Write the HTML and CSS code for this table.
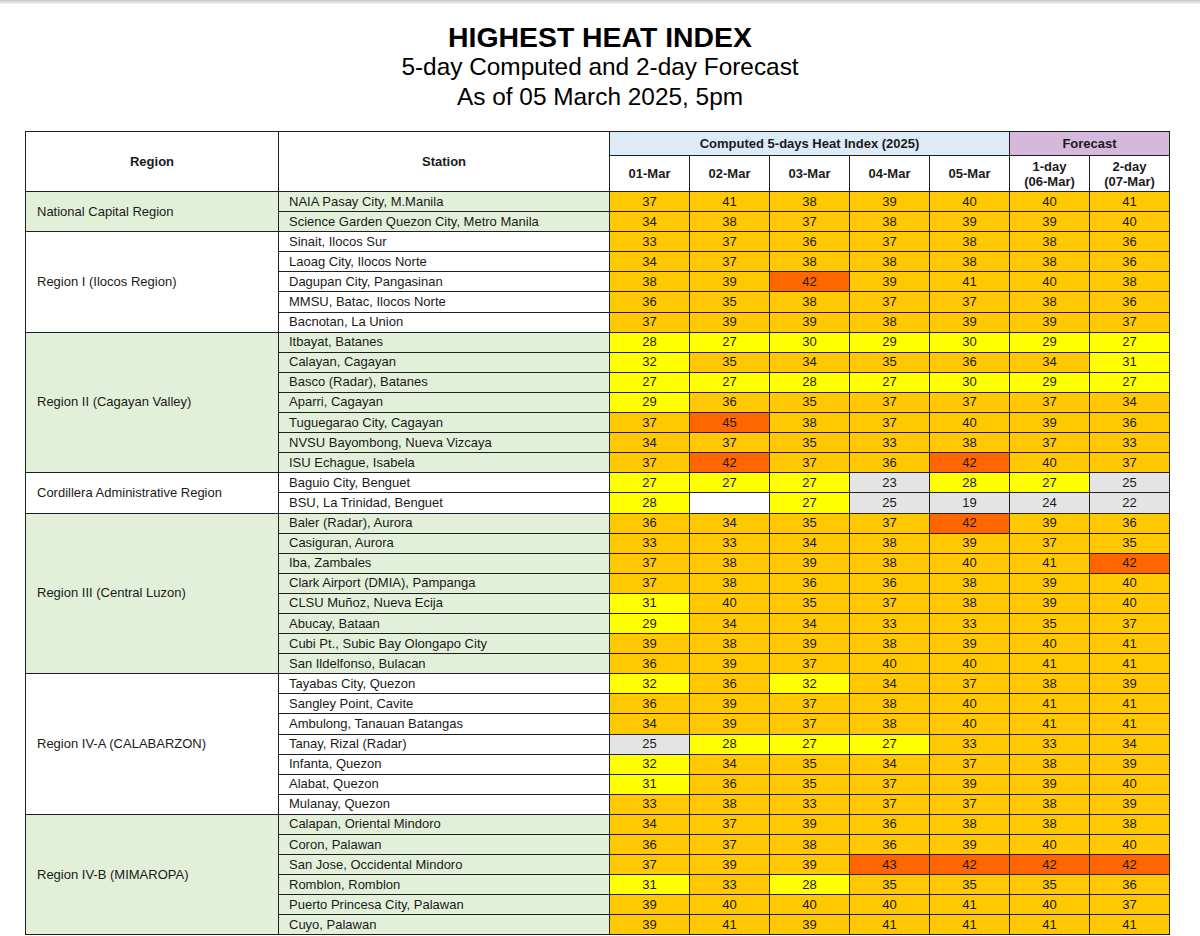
FILE: index.html
```html
<!DOCTYPE html>
<html lang="en">
<head>
<meta charset="utf-8">
<title>Highest Heat Index</title>
<link rel="stylesheet" href="styles.css">
</head>
<body>
<div class="topbar"></div>
<header class="titles">
  <h1 class="title">HIGHEST HEAT INDEX</h1>
  <p class="sub">5-day Computed and 2-day Forecast</p>
  <p class="sub">As of 05 March 2025, 5pm</p>
</header>
<table class="hi">
  <colgroup>
    <col class="col-region"><col class="col-station">
    <col class="col-day"><col class="col-day"><col class="col-day"><col class="col-day"><col class="col-day"><col class="col-day"><col class="col-day">
  </colgroup>
  <thead>
    <tr class="h1row">
      <th rowspan="2" class="hreg">Region</th>
      <th rowspan="2" class="hsta">Station</th>
      <th colspan="5" class="hcomp">Computed 5-days Heat Index (2025)</th>
      <th colspan="2" class="hfc">Forecast</th>
    </tr>
    <tr class="h2row">
      <th>01-Mar</th><th>02-Mar</th><th>03-Mar</th><th>04-Mar</th><th>05-Mar</th>
      <th>1-day<br>(06-Mar)</th><th>2-day<br>(07-Mar)</th>
    </tr>
  </thead>
  <tbody class="grp green">
    <tr><td rowspan="2" class="reg">National Capital Region</td><td class="sta">NAIA Pasay City, M.Manila</td><td class="o">37</td><td class="o">41</td><td class="o">38</td><td class="o">39</td><td class="o">40</td><td class="o">40</td><td class="o">41</td></tr>
    <tr><td class="sta">Science Garden Quezon City, Metro Manila</td><td class="o">34</td><td class="o">38</td><td class="o">37</td><td class="o">38</td><td class="o">39</td><td class="o">39</td><td class="o">40</td></tr>
  </tbody>
  <tbody class="grp white">
    <tr><td rowspan="5" class="reg">Region I (Ilocos Region)</td><td class="sta">Sinait, Ilocos Sur</td><td class="o">33</td><td class="o">37</td><td class="o">36</td><td class="o">37</td><td class="o">38</td><td class="o">38</td><td class="o">36</td></tr>
    <tr><td class="sta">Laoag City, Ilocos Norte</td><td class="o">34</td><td class="o">37</td><td class="o">38</td><td class="o">38</td><td class="o">38</td><td class="o">38</td><td class="o">36</td></tr>
    <tr><td class="sta">Dagupan City, Pangasinan</td><td class="o">38</td><td class="o">39</td><td class="r">42</td><td class="o">39</td><td class="o">41</td><td class="o">40</td><td class="o">38</td></tr>
    <tr><td class="sta">MMSU, Batac, Ilocos Norte</td><td class="o">36</td><td class="o">35</td><td class="o">38</td><td class="o">37</td><td class="o">37</td><td class="o">38</td><td class="o">36</td></tr>
    <tr><td class="sta">Bacnotan, La Union</td><td class="o">37</td><td class="o">39</td><td class="o">39</td><td class="o">38</td><td class="o">39</td><td class="o">39</td><td class="o">37</td></tr>
  </tbody>
  <tbody class="grp green">
    <tr><td rowspan="7" class="reg">Region II (Cagayan Valley)</td><td class="sta">Itbayat, Batanes</td><td class="y">28</td><td class="y">27</td><td class="y">30</td><td class="y">29</td><td class="y">30</td><td class="y">29</td><td class="y">27</td></tr>
    <tr><td class="sta">Calayan, Cagayan</td><td class="y">32</td><td class="o">35</td><td class="o">34</td><td class="o">35</td><td class="o">36</td><td class="o">34</td><td class="y">31</td></tr>
    <tr><td class="sta">Basco (Radar), Batanes</td><td class="y">27</td><td class="y">27</td><td class="y">28</td><td class="y">27</td><td class="y">30</td><td class="y">29</td><td class="y">27</td></tr>
    <tr><td class="sta">Aparri, Cagayan</td><td class="y">29</td><td class="o">36</td><td class="o">35</td><td class="o">37</td><td class="o">37</td><td class="o">37</td><td class="o">34</td></tr>
    <tr><td class="sta">Tuguegarao City, Cagayan</td><td class="o">37</td><td class="r">45</td><td class="o">38</td><td class="o">37</td><td class="o">40</td><td class="o">39</td><td class="o">36</td></tr>
    <tr><td class="sta">NVSU Bayombong, Nueva Vizcaya</td><td class="o">34</td><td class="o">37</td><td class="o">35</td><td class="o">33</td><td class="o">38</td><td class="o">37</td><td class="o">33</td></tr>
    <tr><td class="sta">ISU Echague, Isabela</td><td class="o">37</td><td class="r">42</td><td class="o">37</td><td class="o">36</td><td class="r">42</td><td class="o">40</td><td class="o">37</td></tr>
  </tbody>
  <tbody class="grp white">
    <tr><td rowspan="2" class="reg">Cordillera Administrative Region</td><td class="sta">Baguio City, Benguet</td><td class="y">27</td><td class="y">27</td><td class="y">27</td><td class="g">23</td><td class="y">28</td><td class="y">27</td><td class="g">25</td></tr>
    <tr><td class="sta">BSU, La Trinidad, Benguet</td><td class="y">28</td><td class="w"></td><td class="y">27</td><td class="g">25</td><td class="g">19</td><td class="g">24</td><td class="g">22</td></tr>
  </tbody>
  <tbody class="grp green">
    <tr><td rowspan="8" class="reg">Region III (Central Luzon)</td><td class="sta">Baler (Radar), Aurora</td><td class="o">36</td><td class="o">34</td><td class="o">35</td><td class="o">37</td><td class="r">42</td><td class="o">39</td><td class="o">36</td></tr>
    <tr><td class="sta">Casiguran, Aurora</td><td class="o">33</td><td class="o">33</td><td class="o">34</td><td class="o">38</td><td class="o">39</td><td class="o">37</td><td class="o">35</td></tr>
    <tr><td class="sta">Iba, Zambales</td><td class="o">37</td><td class="o">38</td><td class="o">39</td><td class="o">38</td><td class="o">40</td><td class="o">41</td><td class="r">42</td></tr>
    <tr><td class="sta">Clark Airport (DMIA), Pampanga</td><td class="o">37</td><td class="o">38</td><td class="o">36</td><td class="o">36</td><td class="o">38</td><td class="o">39</td><td class="o">40</td></tr>
    <tr><td class="sta">CLSU Muñoz, Nueva Ecija</td><td class="y">31</td><td class="o">40</td><td class="o">35</td><td class="o">37</td><td class="o">38</td><td class="o">39</td><td class="o">40</td></tr>
    <tr><td class="sta">Abucay, Bataan</td><td class="y">29</td><td class="o">34</td><td class="o">34</td><td class="o">33</td><td class="o">33</td><td class="o">35</td><td class="o">37</td></tr>
    <tr><td class="sta">Cubi Pt., Subic Bay Olongapo City</td><td class="o">39</td><td class="o">38</td><td class="o">39</td><td class="o">38</td><td class="o">39</td><td class="o">40</td><td class="o">41</td></tr>
    <tr><td class="sta">San Ildelfonso, Bulacan</td><td class="o">36</td><td class="o">39</td><td class="o">37</td><td class="o">40</td><td class="o">40</td><td class="o">41</td><td class="o">41</td></tr>
  </tbody>
  <tbody class="grp white">
    <tr><td rowspan="7" class="reg">Region IV-A (CALABARZON)</td><td class="sta">Tayabas City, Quezon</td><td class="y">32</td><td class="o">36</td><td class="y">32</td><td class="o">34</td><td class="o">37</td><td class="o">38</td><td class="o">39</td></tr>
    <tr><td class="sta">Sangley Point, Cavite</td><td class="o">36</td><td class="o">39</td><td class="o">37</td><td class="o">38</td><td class="o">40</td><td class="o">41</td><td class="o">41</td></tr>
    <tr><td class="sta">Ambulong, Tanauan Batangas</td><td class="o">34</td><td class="o">39</td><td class="o">37</td><td class="o">38</td><td class="o">40</td><td class="o">41</td><td class="o">41</td></tr>
    <tr><td class="sta">Tanay, Rizal (Radar)</td><td class="g">25</td><td class="y">28</td><td class="y">27</td><td class="y">27</td><td class="o">33</td><td class="o">33</td><td class="o">34</td></tr>
    <tr><td class="sta">Infanta, Quezon</td><td class="y">32</td><td class="o">34</td><td class="o">35</td><td class="o">34</td><td class="o">37</td><td class="o">38</td><td class="o">39</td></tr>
    <tr><td class="sta">Alabat, Quezon</td><td class="y">31</td><td class="o">36</td><td class="o">35</td><td class="o">37</td><td class="o">39</td><td class="o">39</td><td class="o">40</td></tr>
    <tr><td class="sta">Mulanay, Quezon</td><td class="o">33</td><td class="o">38</td><td class="o">33</td><td class="o">37</td><td class="o">37</td><td class="o">38</td><td class="o">39</td></tr>
  </tbody>
  <tbody class="grp green">
    <tr><td rowspan="6" class="reg">Region IV-B (MIMAROPA)</td><td class="sta">Calapan, Oriental Mindoro</td><td class="o">34</td><td class="o">37</td><td class="o">39</td><td class="o">36</td><td class="o">38</td><td class="o">38</td><td class="o">38</td></tr>
    <tr><td class="sta">Coron, Palawan</td><td class="o">36</td><td class="o">37</td><td class="o">38</td><td class="o">36</td><td class="o">39</td><td class="o">40</td><td class="o">40</td></tr>
    <tr><td class="sta">San Jose, Occidental Mindoro</td><td class="o">37</td><td class="o">39</td><td class="o">39</td><td class="r">43</td><td class="r">42</td><td class="r">42</td><td class="r">42</td></tr>
    <tr><td class="sta">Romblon, Romblon</td><td class="y">31</td><td class="o">33</td><td class="y">28</td><td class="o">35</td><td class="o">35</td><td class="o">35</td><td class="o">36</td></tr>
    <tr><td class="sta">Puerto Princesa City, Palawan</td><td class="o">39</td><td class="o">40</td><td class="o">40</td><td class="o">40</td><td class="o">41</td><td class="o">40</td><td class="o">37</td></tr>
    <tr><td class="sta">Cuyo, Palawan</td><td class="o">39</td><td class="o">41</td><td class="o">39</td><td class="o">41</td><td class="o">41</td><td class="o">41</td><td class="o">41</td></tr>
  </tbody>
</table>
</body>
</html>
```
FILE: styles.css
```css
html, body {
  margin: 0;
  padding: 0;
  background: #ffffff;
}
body {
  width: 1200px;
  height: 936px;
  overflow: hidden;
  font-family: "Liberation Sans", Arial, sans-serif;
  color: #1a1a1a;
}
.topbar {
  height: 4px;
  background: linear-gradient(#c9c9c9, #f4f4f4);
}
.titles {
  margin-top: 18px;
  text-align: center;
  color: #000;
}
.title {
  margin: 0;
  font-size: 28.4px;
  line-height: 30px;
  font-weight: bold;
}
.sub {
  margin: 0;
  font-size: 24.4px;
  line-height: 30px;
}
.hi {
  margin: 19px 0 0 25px;
  border-collapse: collapse;
  table-layout: fixed;
  width: 1145px;
  font-size: 13px;
  border: 1.5px solid #1a1a1a;
}
.col-region { width: 253px; }
.col-station { width: 331px; }
.col-day { width: 80px; }
.hi th, .hi td {
  border: 1px solid #1f1f1f;
  padding: 0;
}
.hi th {
  font-weight: bold;
  text-align: center;
  background: #ffffff;
  line-height: 15px;
}
.h1row { height: 24px; }
.h2row { height: 36px; }
.hreg, .hsta { padding-bottom: 1px; }
.hcomp { background: #ddebf7 !important; }
.hfc { background: #d5b8dc !important; }
.hi tbody tr { height: 20.1px; }
.hi td {
  text-align: center;
  line-height: 14px;
}
.hi td.reg {
  text-align: left;
  padding-left: 11px;
}
.hi td.sta {
  text-align: left;
  padding-left: 10px;
}
.grp { border-top: 1.5px solid #1a1a1a; }
.green .reg, .green .sta { background: #e2f0d9; }
.white .reg, .white .sta { background: #ffffff; }
.o { background: #ffc800; }
.y { background: #ffff00; }
.r { background: #ff6600; }
.g { background: #e4e4e4; }
.w { background: #ffffff; }
```
